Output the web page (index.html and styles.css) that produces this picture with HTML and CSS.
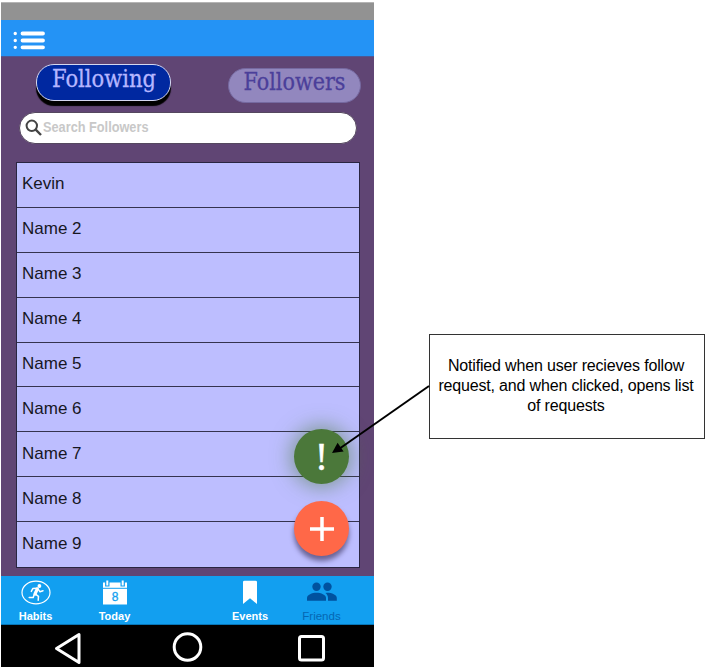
FILE: index.html
```html
<!DOCTYPE html>
<html lang="en">
<head>
<meta charset="utf-8">
<title>Following</title>
<link rel="stylesheet" href="styles.css">
</head>
<body>
<main class="board">
  <section class="phone">
    <div class="status"></div>
    <header class="topbar">
      <svg class="menu" width="32" height="20" viewBox="0 0 32 20" stroke="#fff" stroke-width="3.8" stroke-linecap="round">
        <path d="M9.5 3.5H30M9.5 10.5H30M9.5 17.3H30"/>
        <path d="M2.2 3.5h.1M2.2 10.5h.1M2.2 17.3h.1" stroke-width="3.3"/>
      </svg>
    </header>
    <div class="content">
      <div class="tabs">
        <div class="tab active"><svg width="133" height="36"><text x="15" y="21.5" textLength="104" lengthAdjust="spacingAndGlyphs">Following</text></svg></div>
        <div class="tab"><svg width="131" height="33"><text x="14.5" y="20.5" textLength="102" lengthAdjust="spacingAndGlyphs">Followers</text></svg></div>
      </div>
      <div class="search">
        <svg width="18" height="18" viewBox="0 0 18 18" fill="none" stroke="#444"><circle cx="6.8" cy="6.8" r="5.2" stroke-width="2"/><path d="M10.7 10.7L16 16" stroke-width="2.4"/></svg>
        <span>Search Followers</span>
      </div>
      <ul class="list">
        <li>Kevin</li><li>Name 2</li><li>Name 3</li><li>Name 4</li><li>Name 5</li><li>Name 6</li><li>Name 7</li><li>Name 8</li><li>Name 9</li>
      </ul>
    </div>
    <nav class="tabbar">
      <div class="item habits">
        <svg width="30" height="25" viewBox="0 0 30 25" fill="none" stroke="#fff" stroke-linecap="round" stroke-linejoin="round">
          <ellipse cx="15" cy="12.5" rx="14" ry="11.3" stroke-width="1.2"/>
          <circle cx="18.4" cy="6" r="1.9" fill="#fff" stroke="none"/>
          <path d="M16.3 8.8L14 14" stroke-width="3.2"/>
          <path d="M15.8 8.2L11.8 8.6L10.3 11.4M17.5 9.6L19 11.8L22 10.8M14.5 14.2L17.5 16.3L17.2 20.2M13.2 14.5L12.2 17.5L8.2 17.6" stroke-width="1.5"/>
        </svg>
        <span>Habits</span>
      </div>
      <div class="item today">
        <svg width="24" height="25" viewBox="0 0 24 25">
          <path d="M0 2.5H24V24.5H0Z" fill="#fff"/>
          <path d="M0 8.3H24" stroke="#129ff0"/>
          <path d="M4.3 1v5.5M19.7 1v5.5" stroke="#129ff0" stroke-width="4.4"/>
          <path d="M4.3.5v5M19.7.5v5" stroke="#fff" stroke-width="2"/>
          <text x="12" y="20.5" class="date">8</text>
        </svg>
        <span>Today</span>
      </div>
      <div class="item events">
        <svg width="14" height="25" viewBox="0 0 14 25"><path d="M0 2Q0 .8 1.5.8H12.5Q14 .8 14 2V24L7 18.3L0 24Z" fill="#fff"/></svg>
        <span>Events</span>
      </div>
      <div class="item friends">
        <svg width="30" height="25" viewBox="0 0 30 25" fill="#00529f">
          <circle cx="9.5" cy="6.7" r="4.2"/><circle cx="20.5" cy="6.7" r="4.2"/>
          <path d="M0 20.7V18C0 14.8 5 12.8 9.5 12.8S19 14.8 19 18V20.7Z"/>
          <path d="M20 12.8C25 12.8 29.8 14.8 29.8 18V20.7H21V18C21 15.7 20 14.2 18.5 12.9Z"/>
        </svg>
        <span>Friends</span>
      </div>
    </nav>
    <footer class="android">
      <svg width="374" height="41" viewBox="0 0 374 41" fill="none" stroke="#fff" stroke-width="3" stroke-linejoin="round">
        <path d="M78 9.5V37.5L55.5 23.5Z"/><circle cx="186.5" cy="22" r="13.3"/><rect x="298.5" y="11.5" width="24" height="23.5" rx="2"/>
      </svg>
    </footer>
    <button class="fab alert" aria-label="Follow requests">!</button>
    <button class="fab add" aria-label="Add"><svg width="24" height="24" stroke="#fff" stroke-width="3.5"><path d="M0 12H24M12 0V24"/></svg></button>
  </section>
  <aside class="note">Notified when user recieves follow<br>request, and when clicked, opens list<br>of requests</aside>
  <svg class="arrow" width="100" height="72" viewBox="0 0 100 72"><path d="M99 4L9 67" stroke="#000" stroke-width="2"/><path d="M2 71L7.6 60.8L13.6 69.4Z"/></svg>
</main>
</body>
</html>
```
FILE: styles.css
```css
* { box-sizing: border-box; }
body { margin: 0; background: #fff; font-family: "Liberation Sans", Arial, sans-serif; }
.board { position: relative; width: 713px; height: 667px; overflow: hidden; display: flex; align-items: flex-start; padding: 2px 0 0 1px; }
.phone { position: relative; width: 373px; height: 665px; flex: none; display: flex; flex-direction: column; }
.status { height: 18px; background: #929292; border-top: 1px solid #b4b4b4; }
.topbar { height: 36px; background: #2493f5; padding: 10px 12px; }
.menu, .tab svg, .search svg, .item svg, .android svg { display: block; }
.content { height: 520px; background: #604574; border-top: 1px solid #4d5793; padding: 7px 13px 0 15px; }
.tabs { display: flex; justify-content: space-between; padding-left: 20px; height: 48px; }
.tab { width: 133px; height: 35px; margin-top: 4px; border-radius: 18px; background: #9287be; border: 1px solid #7569a0; }
.tab svg { overflow: visible; }
.tab text { font-family: "DejaVu Serif", serif; font-size: 23.5px; fill: #4b3f9a; stroke: #4b3f9a; stroke-width: .3px; }
.tab.active { width: 135px; height: 37px; margin-top: 0; background: #0028a0; border: 1px solid #d5d7f0; box-shadow: 0 5px 1px #000; }
.tab.active text { fill: #b5b6ff; stroke: #b5b6ff; }
.search { width: 338px; height: 32px; margin-left: 3px; background: #fff; border: 1px solid #55485f; border-radius: 16px; display: flex; align-items: center; padding-left: 5px; gap: 0; font-weight: bold; font-size: 14px; color: #c8c8c8; }
.search span { white-space: nowrap; transform: translateY(-1px) scaleX(.91); transform-origin: left; }
.list { list-style: none; margin: 18px 0 0; padding: 0; width: 344px; height: 406px; border: 1px solid #292541; background: #bdbeff; display: grid; grid-template-rows: repeat(9, 1fr); font-size: 17px; color: #17171f; }
.list li { padding: 0 0 1px 5px; display: flex; align-items: center; border-bottom: 1px solid #35334f; }
.list li:last-child { border-bottom: 0; }
.tabbar { height: 49px; background: #129ff0; border-bottom: 1px solid #0876b7; display: flex; color: #fff; font-size: 11px; font-weight: bold; }
.item { display: flex; flex-direction: column; align-items: center; padding-top: 4px; gap: 5px; }
.item span { line-height: 13px; }
.habits { width: 69px; }
.today { width: 89px; }
.events { width: 54px; margin-left: 64px; }
.friends { width: 89px; color: #0567b3; }
.friends span { font-weight: normal; font-size: 11.5px; }
.date { font-size: 12px; font-weight: normal; text-anchor: middle; fill: #129ff0; stroke: #129ff0; stroke-width: .3px; }
.android { height: 42px; background: #000; }
.fab { position: absolute; left: 293px; width: 55px; height: 55px; border: 0; border-radius: 50%; padding: 0; display: grid; place-items: center; color: #fff; }
.alert { top: 427px; background: #4b783a; box-shadow: 0 0 20px 3px rgba(75,120,58,.55); font: 39px "Liberation Serif", serif; -webkit-text-stroke: .5px #fff; }
.add { top: 499px; background: #ff6848; box-shadow: 0 5px 5px rgba(50,40,80,.6); }
.note { width: 276px; height: 105px; margin: 332px 0 0 55px; padding: 0 2px 2px 0; border: 1px solid #333; display: flex; align-items: center; justify-content: center; text-align: center; font-size: 16px; letter-spacing: -.17px; line-height: 20px; white-space: nowrap; }
.arrow { position: absolute; left: 330px; top: 382px; }
```
